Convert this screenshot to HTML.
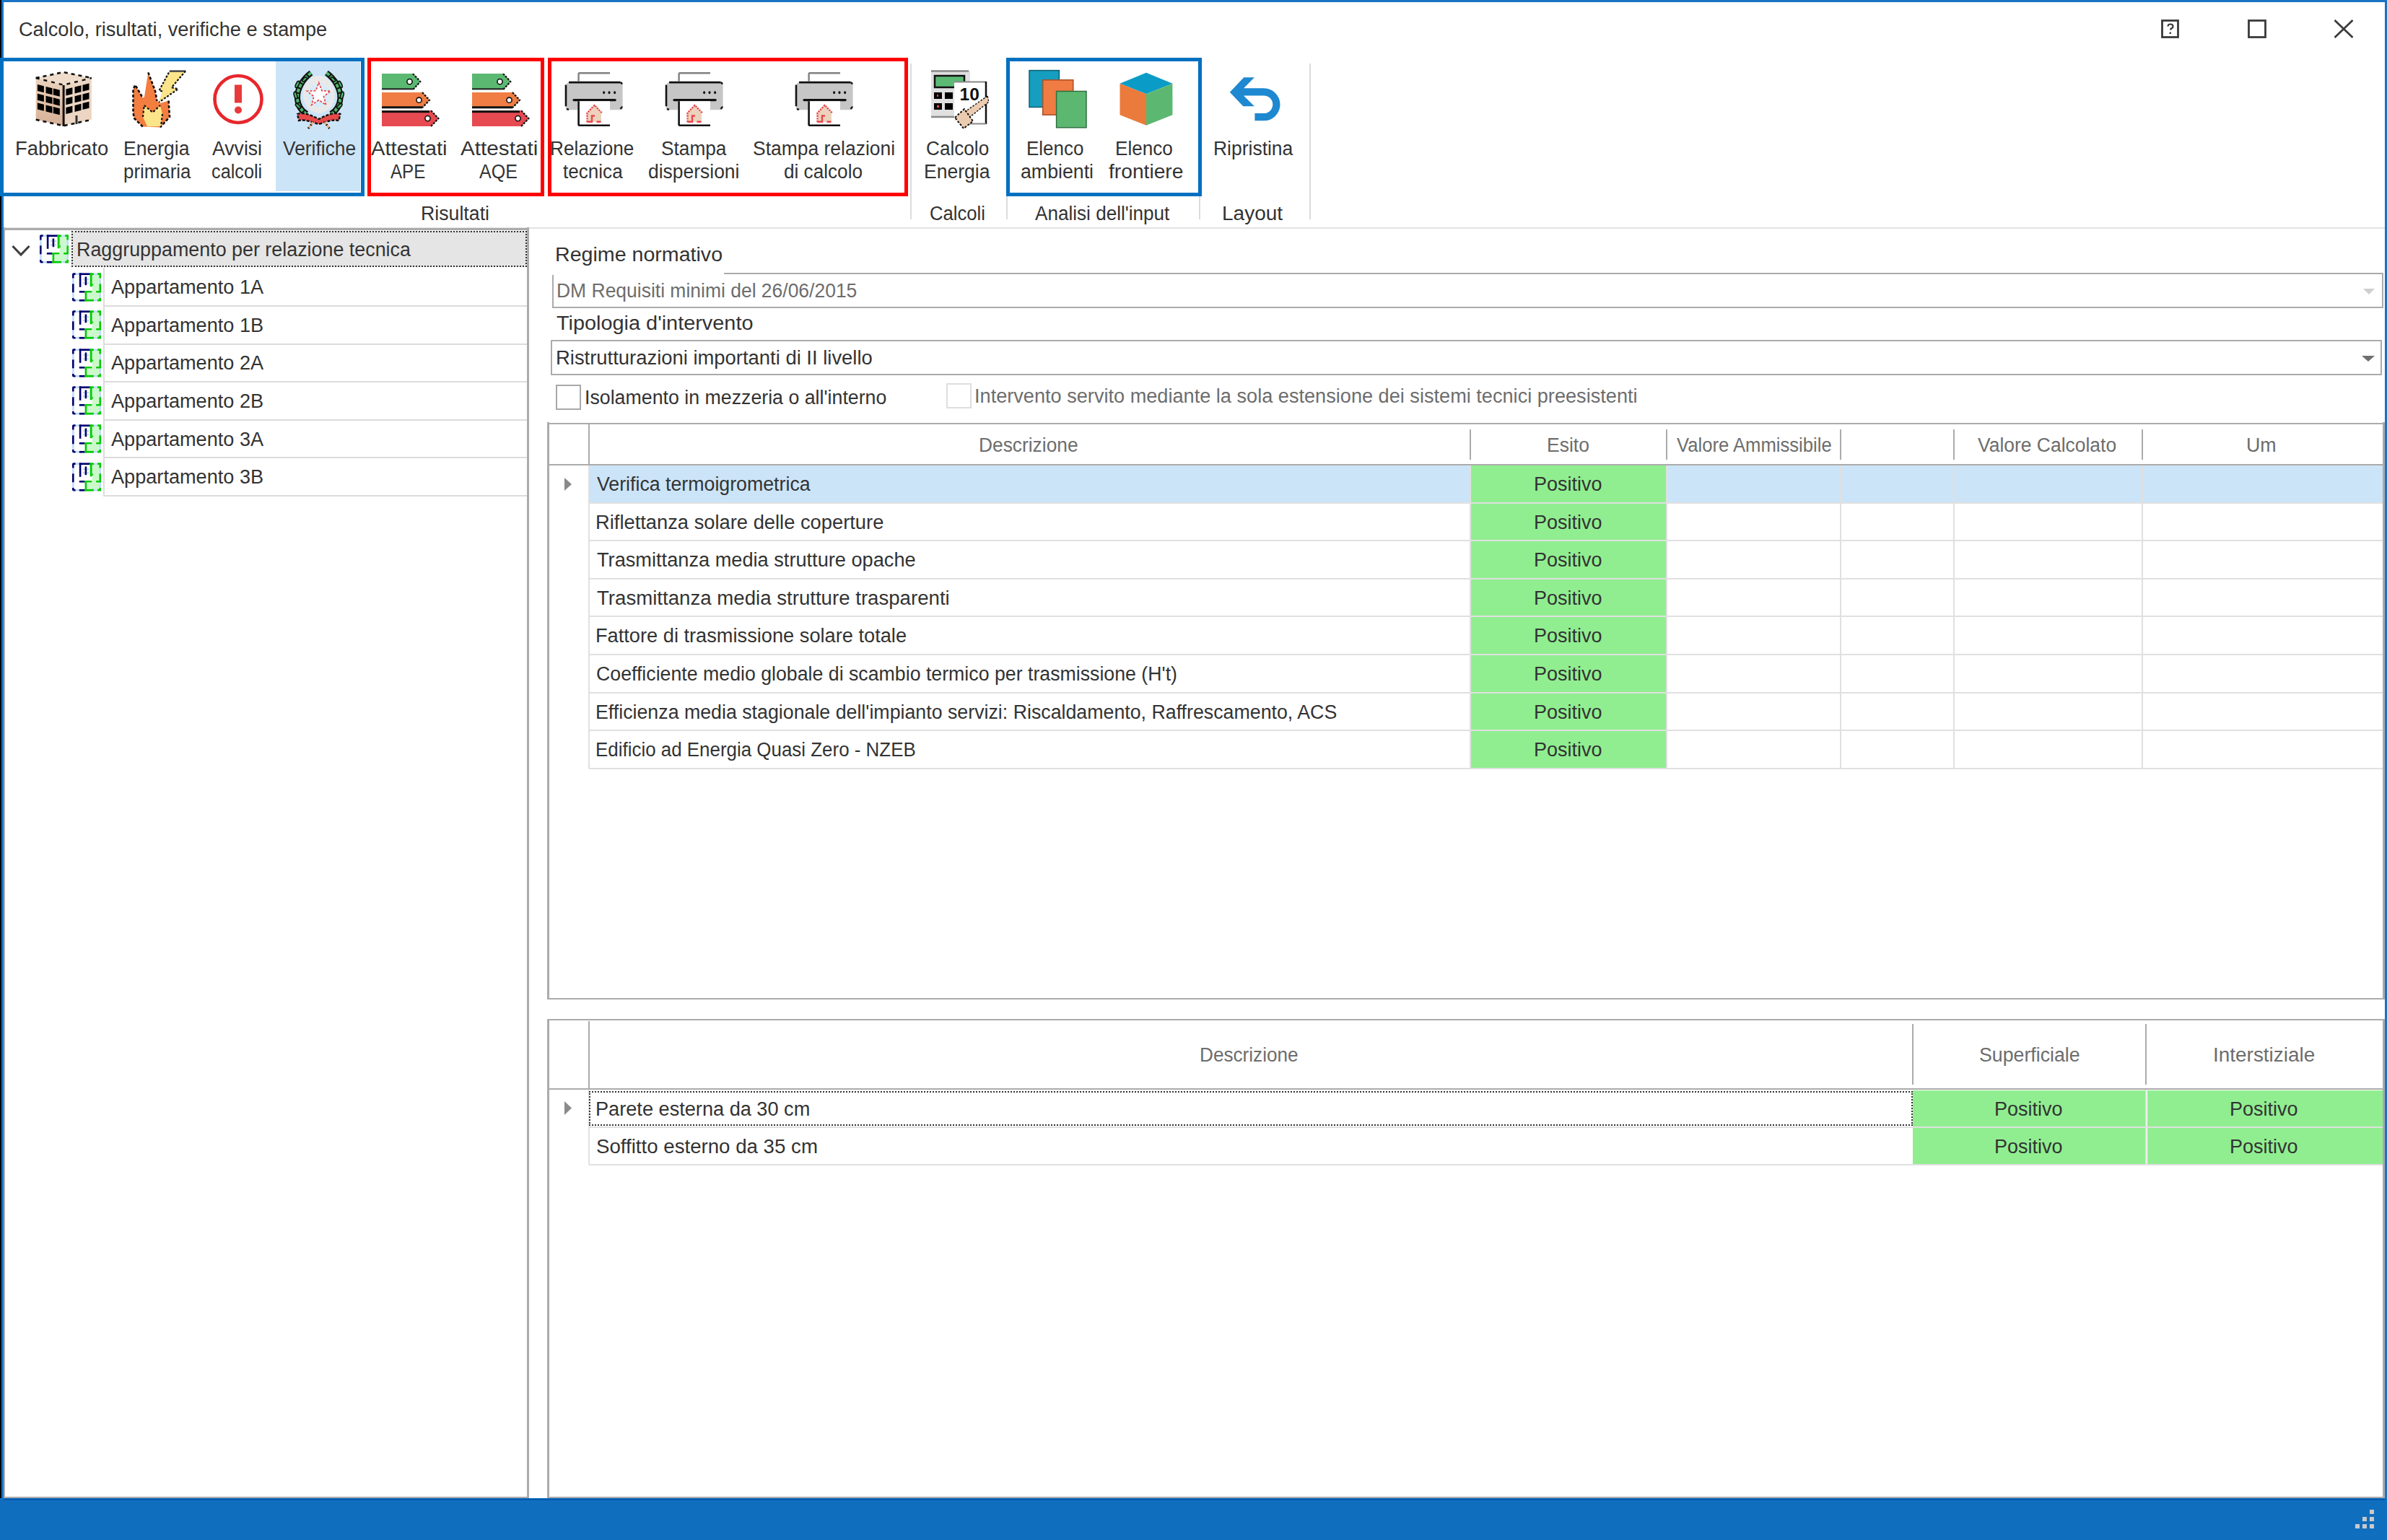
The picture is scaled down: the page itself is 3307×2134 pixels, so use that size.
<!DOCTYPE html>
<html><head><meta charset="utf-8"><style>
html,body{margin:0;padding:0;background:#fff;}
body{width:3307px;height:2134px;position:relative;overflow:hidden;font-family:"Liberation Sans",sans-serif;}
body>div{position:absolute;}
.t{white-space:nowrap;}
</style></head><body>
<div style="left:0px;top:0px;width:3307px;height:3px;background:#1a73c4;"></div>
<div style="left:0px;top:0px;width:2px;height:2134px;background:#000000;"></div>
<div style="left:2px;top:0px;width:3px;height:2134px;background:#1a73c4;"></div>
<div style="left:3304px;top:0px;width:3px;height:2134px;background:#1a73c4;"></div>
<div class="t" style="left:25.59px;top:28.14px;font-size:27px;line-height:27px;color:#333;transform:scaleX(1.0057);transform-origin:0 0;">Calcolo, risultati, verifiche e stampe</div>
<svg style="position:absolute;left:2993px;top:26px" width="28" height="28" viewBox="0 0 28 28"><rect x="2.5" y="2.5" width="22" height="23" fill="none" stroke="#3a3a3a" stroke-width="2.8"/><path d="M10.5 10.5 q0-3 3.5-3 q3.5 0 3.5 3 q0 2.3-3 3.3 v2" fill="none" stroke="#3a3a3a" stroke-width="2.2"/><rect x="12.6" y="18.6" width="2.4" height="2.4" fill="#3a3a3a"/></svg>
<svg style="position:absolute;left:3113px;top:26px" width="28" height="28" viewBox="0 0 28 28"><rect x="2.5" y="2.5" width="23" height="23" fill="none" stroke="#3a3a3a" stroke-width="2.8"/></svg>
<svg style="position:absolute;left:3232px;top:26px" width="30" height="28" viewBox="0 0 30 28"><path d="M2.5 2 L27.5 26 M27.5 2 L2.5 26" stroke="#3a3a3a" stroke-width="2.7" fill="none"/></svg>
<div style="left:382px;top:85px;width:117px;height:180px;background:#cce4f7;"></div>
<div style="left:1261px;top:88px;width:2px;height:216px;background:#dcdcdc;"></div>
<div style="left:1394px;top:88px;width:2px;height:216px;background:#dcdcdc;"></div>
<div style="left:1661px;top:88px;width:2px;height:216px;background:#dcdcdc;"></div>
<div style="left:1814px;top:88px;width:2px;height:216px;background:#dcdcdc;"></div>
<div style="left:5px;top:315px;width:3299px;height:2px;background:#e3e3e3;"></div>
<div class="t" style="left:21.48px;top:192.64px;font-size:27px;line-height:27px;color:#333333;transform:scaleX(1.0120);transform-origin:0 0;">Fabbricato</div>
<div class="t" style="left:170.64px;top:192.64px;font-size:27px;line-height:27px;color:#333333;transform:scaleX(0.9824);transform-origin:0 0;">Energia</div>
<div class="t" style="left:170.84px;top:224.64px;font-size:27px;line-height:27px;color:#333333;transform:scaleX(0.9577);transform-origin:0 0;">primaria</div>
<div class="t" style="left:294.00px;top:192.64px;font-size:27px;line-height:27px;color:#333333;transform:scaleX(0.9855);transform-origin:0 0;">Avvisi</div>
<div class="t" style="left:293.36px;top:224.64px;font-size:27px;line-height:27px;color:#333333;transform:scaleX(0.9356);transform-origin:0 0;">calcoli</div>
<div class="t" style="left:392.00px;top:192.64px;font-size:27px;line-height:27px;color:#333333;transform:scaleX(0.9767);transform-origin:0 0;">Verifiche</div>
<div class="t" style="left:514.40px;top:192.64px;font-size:27px;line-height:27px;color:#333333;transform:scaleX(1.0823);transform-origin:0 0;">Attestati</div>
<div class="t" style="left:541.10px;top:224.64px;font-size:27px;line-height:27px;color:#333333;transform:scaleX(0.8943);transform-origin:0 0;">APE</div>
<div class="t" style="left:638.40px;top:192.64px;font-size:27px;line-height:27px;color:#333333;transform:scaleX(1.1000);transform-origin:0 0;">Attestati</div>
<div class="t" style="left:664.00px;top:224.64px;font-size:27px;line-height:27px;color:#333333;transform:scaleX(0.9286);transform-origin:0 0;">AQE</div>
<div class="t" style="left:762.06px;top:192.64px;font-size:27px;line-height:27px;color:#333333;transform:scaleX(0.9684);transform-origin:0 0;">Relazione</div>
<div class="t" style="left:780.00px;top:224.64px;font-size:27px;line-height:27px;color:#333333;transform:scaleX(0.9663);transform-origin:0 0;">tecnica</div>
<div class="t" style="left:915.53px;top:192.64px;font-size:27px;line-height:27px;color:#333333;transform:scaleX(0.9717);transform-origin:0 0;">Stampa</div>
<div class="t" style="left:898.02px;top:224.64px;font-size:27px;line-height:27px;color:#333333;transform:scaleX(0.9795);transform-origin:0 0;">dispersioni</div>
<div class="t" style="left:1043.02px;top:192.64px;font-size:27px;line-height:27px;color:#333333;transform:scaleX(0.9799);transform-origin:0 0;">Stampa relazioni</div>
<div class="t" style="left:1085.53px;top:224.64px;font-size:27px;line-height:27px;color:#333333;transform:scaleX(0.9685);transform-origin:0 0;">di calcolo</div>
<div class="t" style="left:1282.83px;top:192.64px;font-size:27px;line-height:27px;color:#333333;transform:scaleX(0.9682);transform-origin:0 0;">Calcolo</div>
<div class="t" style="left:1279.53px;top:224.64px;font-size:27px;line-height:27px;color:#333333;transform:scaleX(0.9835);transform-origin:0 0;">Energia</div>
<div class="t" style="left:1422.38px;top:192.64px;font-size:27px;line-height:27px;color:#333333;transform:scaleX(0.9625);transform-origin:0 0;">Elenco</div>
<div class="t" style="left:1414.01px;top:224.64px;font-size:27px;line-height:27px;color:#333333;transform:scaleX(0.9900);transform-origin:0 0;">ambienti</div>
<div class="t" style="left:1544.57px;top:192.64px;font-size:27px;line-height:27px;color:#333333;transform:scaleX(0.9675);transform-origin:0 0;">Elenco</div>
<div class="t" style="left:1536.30px;top:224.64px;font-size:27px;line-height:27px;color:#333333;transform:scaleX(1.0439);transform-origin:0 0;">frontiere</div>
<div class="t" style="left:1680.74px;top:192.64px;font-size:27px;line-height:27px;color:#333333;transform:scaleX(0.9802);transform-origin:0 0;">Ripristina</div>
<div class="t" style="left:583.02px;top:283.14px;font-size:27px;line-height:27px;color:#333333;transform:scaleX(0.9892);transform-origin:0 0;">Risultati</div>
<div class="t" style="left:1288.35px;top:283.14px;font-size:27px;line-height:27px;color:#333333;transform:scaleX(0.9506);transform-origin:0 0;">Calcoli</div>
<div class="t" style="left:1433.60px;top:283.14px;font-size:27px;line-height:27px;color:#333333;transform:scaleX(0.9668);transform-origin:0 0;">Analisi dell'input</div>
<div class="t" style="left:1693.43px;top:283.14px;font-size:27px;line-height:27px;color:#333333;transform:scaleX(1.0367);transform-origin:0 0;">Layout</div>
<svg style="position:absolute;left:48px;top:98px" width="80" height="80" viewBox="0 0 80 80"><defs><linearGradient id="bl" x1="0" y1="0" x2="0" y2="1"><stop offset="0" stop-color="#ecd3be"/><stop offset="1" stop-color="#d6b096"/></linearGradient></defs><path d="M1.7 10 L40 2 L78.9 10 L40 19.8 Z" fill="#efdccb"/><path d="M1.7 10 L40 19.8 L40 76.3 L1.7 67.8 Z" fill="url(#bl)"/><path d="M40 19.8 L78.9 10 L78.9 67.8 L40 76.3 Z" fill="#ecd6c3"/><path d="M1.7 10 L40 2 L78.9 10" fill="none" stroke="#111" stroke-width="2.6" stroke-dasharray="5 5"/><path d="M1.7 10 L40 19.8 L78.9 10" fill="none" stroke="#111" stroke-width="2.4" stroke-dasharray="5 6"/><path d="M1.7 67.8 L40 76.3 L78.9 67.8" fill="none" stroke="#111" stroke-width="2.6" stroke-dasharray="5 5"/><rect x="38.6" y="20" width="3" height="57" fill="#111"/><path d="M3.9000000000000004 18.9652 L12.9 21.265199999999997 L12.9 30.265199999999997 L3.9000000000000004 27.9652 Z" fill="#000"/><path d="M3.9000000000000004 31.765200000000007 L12.9 34.065200000000004 L12.9 43.065200000000004 L3.9000000000000004 40.76520000000001 Z" fill="#000"/><path d="M3.9000000000000004 44.4652 L12.9 46.7652 L12.9 55.7652 L3.9000000000000004 53.4652 Z" fill="#000"/><path d="M15.5 21.9348 L24.5 24.234799999999996 L24.5 33.2348 L15.5 30.934800000000003 Z" fill="#000"/><path d="M15.5 34.73480000000001 L24.5 37.034800000000004 L24.5 46.034800000000004 L15.5 43.73480000000001 Z" fill="#000"/><path d="M15.5 47.4348 L24.5 49.7348 L24.5 58.7348 L15.5 56.4348 Z" fill="#000"/><path d="M25.8 24.5716 L34.8 26.871599999999997 L34.8 35.871599999999994 L25.8 33.5716 Z" fill="#000"/><path d="M25.8 37.37160000000001 L34.8 39.671600000000005 L34.8 48.671600000000005 L25.8 46.37160000000001 Z" fill="#000"/><path d="M25.8 50.0716 L34.8 52.371599999999994 L34.8 61.371599999999994 L25.8 59.0716 Z" fill="#000"/><path d="M43.4 25.539199999999997 L52.4 23.2792 L52.4 32.279199999999996 L43.4 34.5392 Z" fill="#000"/><path d="M43.4 38.339200000000005 L52.4 36.0792 L52.4 45.0792 L43.4 47.339200000000005 Z" fill="#000"/><path d="M43.4 50.9392 L52.4 48.679199999999994 L52.4 57.679199999999994 L43.4 59.9392 Z" fill="#000"/><path d="M55.5 22.49 L64.5 20.23 L64.5 29.23 L55.5 31.49 Z" fill="#000"/><path d="M55.5 35.290000000000006 L64.5 33.03 L64.5 42.03 L55.5 44.290000000000006 Z" fill="#000"/><path d="M55.5 47.89 L64.5 45.629999999999995 L64.5 54.629999999999995 L55.5 56.89 Z" fill="#000"/><path d="M66.5 19.717999999999996 L75.5 17.458 L75.5 26.458 L66.5 28.717999999999996 Z" fill="#000"/><path d="M66.5 32.51800000000001 L75.5 30.258000000000006 L75.5 39.258 L66.5 41.51800000000001 Z" fill="#000"/><path d="M66.5 45.118 L75.5 42.858 L75.5 51.858 L66.5 54.118 Z" fill="#000"/><rect x="56.5" y="62" width="3" height="12" fill="#333"/></svg>
<svg style="position:absolute;left:182px;top:96px" width="80" height="84" viewBox="0 0 80 84"><path d="M53 2.4 L75.1 2.4 L55.7 25.2 L64.7 27.3 L37.8 46 L43 30.5 L38.5 29.5 Z" fill="#fbe48a"/><path d="M53 2.6 L75.1 2.6" stroke="#444" stroke-width="2.5"/><path d="M75.1 2.4 L55.7 25.2 L64.7 27.3 L37.8 46 M43 30.5 L38.5 29.5 L53 2.4" fill="none" stroke="#111" stroke-width="2.2" stroke-dasharray="3 2"/><path d="M15.7 79.5 L4 68 L2.5 60 L2.5 28 L5.3 21.7 L16 40 L18 38 L23.3 4.4 L33 30 L35.5 44 L40 47 L51.6 43.5 L53 66 L40 80.5 Z" fill="#f37e3f"/><path d="M15.7 79.5 L4 68 L2.5 60 L2.5 28 L5.3 21.7 L16 40 M23.3 4.4 L33 30 L35.5 44 M51.6 43.5 L53 66 L40 80.5" fill="none" stroke="#111" stroke-width="2.6" stroke-dasharray="4 2.5"/><path d="M17.7 50 L29.5 59.7 L40 50 L43 62 L41 79 L22 79.5 L16 66 Z" fill="#fbe48a"/><path d="M17.7 50 L29.5 59.7 L40 50 M16 66 L17.7 50 M43 62 L41 79" fill="none" stroke="#111" stroke-width="2.2" stroke-dasharray="3 2.5"/></svg>
<svg style="position:absolute;left:293px;top:100px" width="74" height="75" viewBox="0 0 74 75"><circle cx="37" cy="37.5" r="32.5" fill="none" stroke="#e8262d" stroke-width="4.6"/><rect x="32" y="17.5" width="10" height="25" fill="#e83a3a"/><circle cx="37" cy="52.5" r="5" fill="#e83a3a"/></svg>
<svg style="position:absolute;left:400px;top:95px" width="84" height="88" viewBox="0 0 84 88"><ellipse cx="41.7" cy="35.8" rx="22" ry="26" fill="#e9e9e9"/><circle cx="41.7" cy="37" r="16.5" fill="#d6edf9"/><path d="M41.7 19.5 L45.9 30.7 L57.9 31.2 L48.5 38.7 L51.7 50.3 L41.7 43.7 L31.7 50.3 L34.9 38.7 L25.5 31.2 L37.5 30.7 Z" fill="#fff" stroke="#e84a4a" stroke-width="1.8" stroke-dasharray="3 2"/><g id="br"><path d="M31 6 C20 14 11 28 12 42 C13 52 18 59 25 63" fill="none" stroke="#111" stroke-width="8"/><path d="M31 6 C20 14 11 28 12 42 C13 52 18 59 25 63" fill="none" stroke="#4db86a" stroke-width="4" stroke-dasharray="5 2"/><ellipse cx="12" cy="22" rx="2" ry="5" transform="rotate(25 12 22)" fill="#4db86a" stroke="#111" stroke-width="1.6"/><ellipse cx="9.5" cy="37" rx="2" ry="5" transform="rotate(-15 9.5 37)" fill="#4db86a" stroke="#111" stroke-width="1.6"/><ellipse cx="13" cy="52" rx="2" ry="4.5" transform="rotate(-45 13 52)" fill="#4db86a" stroke="#111" stroke-width="1.6"/><ellipse cx="22" cy="15" rx="1.8" ry="4" transform="rotate(45 22 15)" fill="#4db86a" stroke="#111" stroke-width="1.5"/></g><use href="#br" transform="translate(83.4 0) scale(-1 1)"/><path d="M12 63 C20 60 30 64 41.7 70 C53 64 63 60 71.4 63 L69.5 72 C60 70 52 74 41.7 77 C31 74 23 70 14 72 Z" fill="#e84a4a" stroke="#111" stroke-width="2.4" stroke-dasharray="4 2"/><path d="M27 83 L34 74 M56.4 83 L49.4 74" stroke="#e2b48e" stroke-width="3"/><path d="M27 83 L34 74 M56.4 83 L49.4 74" stroke="#111" stroke-width="3" stroke-dasharray="1.5 4" fill="none"/></svg>
<svg style="position:absolute;left:529px;top:101.7px" width="82" height="78" viewBox="0 0 82 78"><path d="M0 0 L43 0 L53.3 11.15 L43 22.3 L0 22.3 Z" fill="#5bb871"/><path d="M43 0 L53.3 11.15 L43 22.3" fill="none" stroke="#111" stroke-width="2.2" stroke-dasharray="3 1.5"/><circle cx="38.5" cy="11.15" r="3.6" fill="#fff" stroke="#111" stroke-width="1.6"/><path d="M0 26.1 L56 26.1 L66 36.7 L56 47.3 L0 47.3 Z" fill="#f07d44"/><path d="M56 26.1 L66 36.7 L56 47.3" fill="none" stroke="#111" stroke-width="2.2" stroke-dasharray="3 1.5"/><circle cx="51.5" cy="36.7" r="3.6" fill="#fff" stroke="#111" stroke-width="1.6"/><path d="M0 51.2 L68 51.2 L78.4 62.1 L68 73.0 L0 73.0 Z" fill="#e84a52"/><path d="M68 51.2 L78.4 62.1 L68 73.0" fill="none" stroke="#111" stroke-width="2.2" stroke-dasharray="3 1.5"/><circle cx="63.5" cy="62.1" r="3.6" fill="#fff" stroke="#111" stroke-width="1.6"/><rect x="0" y="45.3" width="56" height="3" fill="#111"/><rect x="0" y="51.2" width="66" height="3" fill="#111"/><rect x="0" y="20.3" width="43" height="2" fill="#222"/></svg>
<svg style="position:absolute;left:654px;top:101.7px" width="82" height="78" viewBox="0 0 82 78"><path d="M0 0 L43 0 L53.3 11.15 L43 22.3 L0 22.3 Z" fill="#5bb871"/><path d="M43 0 L53.3 11.15 L43 22.3" fill="none" stroke="#111" stroke-width="2.2" stroke-dasharray="3 1.5"/><circle cx="38.5" cy="11.15" r="3.6" fill="#fff" stroke="#111" stroke-width="1.6"/><path d="M0 26.1 L56 26.1 L66 36.7 L56 47.3 L0 47.3 Z" fill="#f07d44"/><path d="M56 26.1 L66 36.7 L56 47.3" fill="none" stroke="#111" stroke-width="2.2" stroke-dasharray="3 1.5"/><circle cx="51.5" cy="36.7" r="3.6" fill="#fff" stroke="#111" stroke-width="1.6"/><path d="M0 51.2 L68 51.2 L78.4 62.1 L68 73.0 L0 73.0 Z" fill="#e84a52"/><path d="M68 51.2 L78.4 62.1 L68 73.0" fill="none" stroke="#111" stroke-width="2.2" stroke-dasharray="3 1.5"/><circle cx="63.5" cy="62.1" r="3.6" fill="#fff" stroke="#111" stroke-width="1.6"/><rect x="0" y="45.3" width="56" height="3" fill="#111"/><rect x="0" y="51.2" width="66" height="3" fill="#111"/><rect x="0" y="20.3" width="43" height="2" fill="#222"/></svg>
<svg style="position:absolute;left:781px;top:99px" width="84" height="78" viewBox="0 0 84 78"><path d="M20.6 13.5 L20.6 3.3 Q20.6 2.3 22 2.3 L64 2.3" fill="none" stroke="#808080" stroke-width="2.4"/><path d="M4 17 Q4 15.5 6 15.5 L79 15.5 Q81.6 15.5 81.6 18 L81.6 51 Q81.6 53.2 79 53.2 L64 53.2 L64 41 L19.3 41 L19.3 53.2 L6 53.2 Q3 53.2 3 50 Z" fill="#c6c6c6"/><path d="M7 15.2 L78.4 15.2" stroke="#111" stroke-width="2.8"/><path d="M78.4 15.2 Q80.3 15.5 80.8 17.6" fill="none" stroke="#111" stroke-width="2.4"/><path d="M3 18.5 L3 48.3" stroke="#111" stroke-width="2.6"/><path d="M4 52 L7 52.8" stroke="#111" stroke-width="2.4"/><path d="M78.3 51.8 Q80.6 50.5 80.8 48.5" fill="none" stroke="#111" stroke-width="2.4"/><path d="M14 39.6 L71.2 39.6" stroke="#111" stroke-width="3.2" stroke-linecap="round"/><ellipse cx="55.6" cy="29.2" rx="1.5" ry="2" fill="#111"/><ellipse cx="63" cy="29.2" rx="1.5" ry="2" fill="#111"/><ellipse cx="70.6" cy="29.2" rx="1.5" ry="2" fill="#111"/><rect x="21.9" y="41.3" width="42.1" height="32" fill="#fff"/><path d="M20.6 41.3 L20.6 73.5 Q20.6 74.7 22 74.7 L64 74.7" fill="none" stroke="#111" stroke-width="2.6"/><path d="M33 57 L42.6 46.8 L52 57 L52 70 L33 70 Z" fill="#ecd2bd"/><path d="M32.5 70.2 L32.5 57.5 L42.6 46.8 L53.5 58" fill="none" stroke="#e8484c" stroke-width="2.3" stroke-dasharray="2.4 1.2"/><path d="M32.5 69.8 L39 69.8 L39 61.5 L43 61.5 M45.5 69.8 L51.5 69.8" fill="none" stroke="#e8484c" stroke-width="2.4"/></svg>
<svg style="position:absolute;left:920px;top:99px" width="84" height="78" viewBox="0 0 84 78"><path d="M20.6 13.5 L20.6 3.3 Q20.6 2.3 22 2.3 L64 2.3" fill="none" stroke="#808080" stroke-width="2.4"/><path d="M4 17 Q4 15.5 6 15.5 L79 15.5 Q81.6 15.5 81.6 18 L81.6 51 Q81.6 53.2 79 53.2 L64 53.2 L64 41 L19.3 41 L19.3 53.2 L6 53.2 Q3 53.2 3 50 Z" fill="#c6c6c6"/><path d="M7 15.2 L78.4 15.2" stroke="#111" stroke-width="2.8"/><path d="M78.4 15.2 Q80.3 15.5 80.8 17.6" fill="none" stroke="#111" stroke-width="2.4"/><path d="M3 18.5 L3 48.3" stroke="#111" stroke-width="2.6"/><path d="M4 52 L7 52.8" stroke="#111" stroke-width="2.4"/><path d="M78.3 51.8 Q80.6 50.5 80.8 48.5" fill="none" stroke="#111" stroke-width="2.4"/><path d="M14 39.6 L71.2 39.6" stroke="#111" stroke-width="3.2" stroke-linecap="round"/><ellipse cx="55.6" cy="29.2" rx="1.5" ry="2" fill="#111"/><ellipse cx="63" cy="29.2" rx="1.5" ry="2" fill="#111"/><ellipse cx="70.6" cy="29.2" rx="1.5" ry="2" fill="#111"/><rect x="21.9" y="41.3" width="42.1" height="32" fill="#fff"/><path d="M20.6 41.3 L20.6 73.5 Q20.6 74.7 22 74.7 L64 74.7" fill="none" stroke="#111" stroke-width="2.6"/><path d="M33 57 L42.6 46.8 L52 57 L52 70 L33 70 Z" fill="#ecd2bd"/><path d="M32.5 70.2 L32.5 57.5 L42.6 46.8 L53.5 58" fill="none" stroke="#e8484c" stroke-width="2.3" stroke-dasharray="2.4 1.2"/><path d="M32.5 69.8 L39 69.8 L39 61.5 L43 61.5 M45.5 69.8 L51.5 69.8" fill="none" stroke="#e8484c" stroke-width="2.4"/></svg>
<svg style="position:absolute;left:1100px;top:99px" width="84" height="78" viewBox="0 0 84 78"><path d="M20.6 13.5 L20.6 3.3 Q20.6 2.3 22 2.3 L64 2.3" fill="none" stroke="#808080" stroke-width="2.4"/><path d="M4 17 Q4 15.5 6 15.5 L79 15.5 Q81.6 15.5 81.6 18 L81.6 51 Q81.6 53.2 79 53.2 L64 53.2 L64 41 L19.3 41 L19.3 53.2 L6 53.2 Q3 53.2 3 50 Z" fill="#c6c6c6"/><path d="M7 15.2 L78.4 15.2" stroke="#111" stroke-width="2.8"/><path d="M78.4 15.2 Q80.3 15.5 80.8 17.6" fill="none" stroke="#111" stroke-width="2.4"/><path d="M3 18.5 L3 48.3" stroke="#111" stroke-width="2.6"/><path d="M4 52 L7 52.8" stroke="#111" stroke-width="2.4"/><path d="M78.3 51.8 Q80.6 50.5 80.8 48.5" fill="none" stroke="#111" stroke-width="2.4"/><path d="M14 39.6 L71.2 39.6" stroke="#111" stroke-width="3.2" stroke-linecap="round"/><ellipse cx="55.6" cy="29.2" rx="1.5" ry="2" fill="#111"/><ellipse cx="63" cy="29.2" rx="1.5" ry="2" fill="#111"/><ellipse cx="70.6" cy="29.2" rx="1.5" ry="2" fill="#111"/><rect x="21.9" y="41.3" width="42.1" height="32" fill="#fff"/><path d="M20.6 41.3 L20.6 73.5 Q20.6 74.7 22 74.7 L64 74.7" fill="none" stroke="#111" stroke-width="2.6"/><path d="M33 57 L42.6 46.8 L52 57 L52 70 L33 70 Z" fill="#ecd2bd"/><path d="M32.5 70.2 L32.5 57.5 L42.6 46.8 L53.5 58" fill="none" stroke="#e8484c" stroke-width="2.3" stroke-dasharray="2.4 1.2"/><path d="M32.5 69.8 L39 69.8 L39 61.5 L43 61.5 M45.5 69.8 L51.5 69.8" fill="none" stroke="#e8484c" stroke-width="2.4"/></svg>
<svg style="position:absolute;left:1288px;top:96px" width="82" height="84" viewBox="0 0 82 84"><rect x="2" y="2" width="54" height="64" fill="#e0e0e0"/><path d="M2 2.5 L54 2.5 M2 66 L40 66" stroke="#888" stroke-width="2.5"/><rect x="7" y="9" width="41" height="16" fill="#5cba74" stroke="#111" stroke-width="2.5"/><rect x="6" y="32" width="11" height="9" fill="#000"/><rect x="21" y="32" width="11" height="9" fill="#000"/><rect x="6" y="47" width="11" height="9" fill="#000"/><rect x="21" y="47" width="11" height="9" fill="#000"/><rect x="10" y="35" width="2" height="3" fill="#e84a4a"/><rect x="10" y="50" width="3" height="3" fill="#e84a4a"/><rect x="34" y="17" width="44" height="59" fill="#fff"/><path d="M34 17.5 L78 17.5" stroke="#888" stroke-width="2"/><path d="M78 17 L78 76" stroke="#111" stroke-width="2.5"/><path d="M50 75.5 L78 75.5" stroke="#888" stroke-width="2"/><text x="41.5" y="42.8" font-family="Liberation Sans" font-weight="bold" font-size="24.5" fill="#111">10</text><path d="M80 37 L50 58 L56 66 L82 45 Z" fill="#ecccb0" stroke="#111" stroke-width="1.5" stroke-dasharray="2.5 2"/><path d="M35 67 L48 55 L60 72 L47 82 Z" fill="#ecccb0" stroke="#111" stroke-width="2" stroke-dasharray="3 2"/></svg>
<svg style="position:absolute;left:1424px;top:96px" width="84" height="84" viewBox="0 0 84 84"><rect x="2" y="1.6" width="41.4" height="50.9" fill="#159ebf" stroke="#0e5f73" stroke-width="1.5"/><rect x="20.7" y="14.8" width="42.1" height="48.4" fill="#f07b43" stroke="#a5502a" stroke-width="1.5"/><rect x="39.6" y="30.5" width="41.4" height="50.3" fill="#5cb870" stroke="#2f6f3f" stroke-width="1.5"/></svg>
<svg style="position:absolute;left:1549px;top:98px" width="78" height="78" viewBox="0 0 78 78"><path d="M2.5 17.8 L39 2.8 L75.4 17.8 L39 32.3 Z" fill="#0a9cc6"/><path d="M2.5 17.8 L39 32.3 L39 75.7 L2.5 61.2 Z" fill="#ea7b3c"/><path d="M39 32.3 L75.4 17.8 L75.4 61.2 L39 75.7 Z" fill="#5cb870"/></svg>
<svg style="position:absolute;left:1700px;top:104px" width="78" height="68" viewBox="0 0 78 68"><path d="M3.8 23.8 L23.3 3.3 L37.9 3.3 L23.3 18 L23.3 29 L37.9 43.2 L22.3 43.2 Z" fill="#1e88d0"/><path d="M22 23.4 L51 23.4 A17.4 17.4 0 0 1 51 58.2 L38.4 58.2" fill="none" stroke="#1e88d0" stroke-width="10.2"/></svg>
<div style="left:0px;top:80px;width:505px;height:192px;box-sizing:border-box;border:5px solid #0070c0;"></div>
<div style="left:509px;top:80px;width:245px;height:192px;box-sizing:border-box;border:5px solid #ff0000;"></div>
<div style="left:759px;top:80px;width:499px;height:192px;box-sizing:border-box;border:5px solid #ff0000;"></div>
<div style="left:1394px;top:80px;width:271px;height:192px;box-sizing:border-box;border:5px solid #0070c0;"></div>
<div style="left:5px;top:316px;width:728px;height:3px;background:#ababab;"></div>
<div style="left:5px;top:315px;width:2px;height:1761px;background:#ababab;"></div>
<div style="left:5px;top:2074px;width:728px;height:2px;background:#ababab;"></div>
<div style="left:730px;top:315px;width:3px;height:1761px;background:#ababab;"></div>
<div style="left:99px;top:320px;width:631px;height:50px;background:#e5e5e5;"></div>
<div style="left:99px;top:320px;width:631px;height:50px;box-sizing:border-box;border:2px solid #333;border-style:dotted;"></div>
<svg style="position:absolute;left:15px;top:338px" width="28" height="20" viewBox="0 0 28 20"><path d="M2.5 3 L14 15 L25.5 3" fill="none" stroke="#404040" stroke-width="3.2"/></svg>
<svg style="position:absolute;left:54.5px;top:325.2px" width="40" height="40" viewBox="0 0 40 40"><rect x="27.6" y="3" width="9.8" height="33.7" fill="#ccf9cc"/><rect x="20.2" y="27.3" width="17.2" height="9.4" fill="#ccf9cc"/><rect x="0.2" y="7.5" width="2.4" height="7.8" fill="#bcdcfa"/><rect x="0.2" y="27.3" width="2.4" height="7.7" fill="#bcdcfa"/><rect x="4.6" y="0.4" width="5.2" height="2.6" fill="#bcdcfa"/><rect x="4.6" y="36.9" width="5.2" height="2.6" fill="#bcdcfa"/><rect x="37.4" y="7.5" width="2.6" height="7.8" fill="#bcdcfa"/><rect x="37.4" y="27.3" width="2.6" height="7.7" fill="#bcdcfa"/><rect x="29.9" y="0.4" width="5.2" height="2.6" fill="#bcdcfa"/><rect x="29.9" y="36.9" width="5.2" height="2.6" fill="#bcdcfa"/><rect x="15" y="8" width="2.4" height="2.4" fill="#bcdcfa"/><rect x="15" y="13" width="2.4" height="2.4" fill="#bcdcfa"/><rect x="20.6" y="8" width="2.4" height="2.4" fill="#bcdcfa"/><rect x="20.6" y="13" width="2.4" height="2.4" fill="#bcdcfa"/><path d="M1.3 7.5 L1.3 2.2 Q1.3 1.6 2 1.6 L4.6 1.6" fill="none" stroke="#000070" stroke-width="2.6"/><rect x="0" y="15.3" width="2.6" height="12" fill="#000070"/><path d="M1.3 35 L1.3 37.4 Q1.3 38.2 2.2 38.2 L4.6 38.2" fill="none" stroke="#000070" stroke-width="2.6"/><rect x="9.8" y="0.4" width="15" height="2.7" fill="#000070"/><rect x="9.8" y="0.4" width="2.6" height="19.4" fill="#000070"/><rect x="17.6" y="5.5" width="2.6" height="11.7" fill="#000070"/><rect x="9.8" y="25" width="7.8" height="2.6" fill="#000070"/><rect x="9.8" y="36.9" width="7.8" height="2.7" fill="#000070"/><rect x="24.7" y="0.4" width="5.2" height="2.7" fill="#00cc00"/><path d="M35.1 1.7 L38.7 1.7 L38.7 7.5" fill="none" stroke="#00cc00" stroke-width="2.7"/><rect x="24.7" y="0.4" width="2.9" height="18.8" fill="#00cc00"/><path d="M27.6 14.5 L29.5 16.6 L27.6 18.5 Z" fill="#00cc00"/><path d="M33.2 26.2 L38.7 26.2 L38.7 15.3" fill="none" stroke="#00cc00" stroke-width="2.6"/><rect x="17.6" y="25" width="9.7" height="2.4" fill="#00cc00"/><rect x="17.6" y="25" width="2.6" height="14.4" fill="#00cc00"/><rect x="17.6" y="36.8" width="12.3" height="2.8" fill="#00cc00"/><path d="M35.1 38.2 L38.7 38.2 L38.7 35" fill="none" stroke="#00cc00" stroke-width="2.8"/></svg>
<div class="t" style="left:106.21px;top:332.84px;font-size:27px;line-height:27px;color:#333333;transform:scaleX(0.9950);transform-origin:0 0;">Raggruppamento per relazione tecnica</div>
<svg style="position:absolute;left:99.5px;top:377.5px" width="40" height="40" viewBox="0 0 40 40"><rect x="27.6" y="3" width="9.8" height="33.7" fill="#ccf9cc"/><rect x="20.2" y="27.3" width="17.2" height="9.4" fill="#ccf9cc"/><rect x="0.2" y="7.5" width="2.4" height="7.8" fill="#bcdcfa"/><rect x="0.2" y="27.3" width="2.4" height="7.7" fill="#bcdcfa"/><rect x="4.6" y="0.4" width="5.2" height="2.6" fill="#bcdcfa"/><rect x="4.6" y="36.9" width="5.2" height="2.6" fill="#bcdcfa"/><rect x="37.4" y="7.5" width="2.6" height="7.8" fill="#bcdcfa"/><rect x="37.4" y="27.3" width="2.6" height="7.7" fill="#bcdcfa"/><rect x="29.9" y="0.4" width="5.2" height="2.6" fill="#bcdcfa"/><rect x="29.9" y="36.9" width="5.2" height="2.6" fill="#bcdcfa"/><rect x="15" y="8" width="2.4" height="2.4" fill="#bcdcfa"/><rect x="15" y="13" width="2.4" height="2.4" fill="#bcdcfa"/><rect x="20.6" y="8" width="2.4" height="2.4" fill="#bcdcfa"/><rect x="20.6" y="13" width="2.4" height="2.4" fill="#bcdcfa"/><path d="M1.3 7.5 L1.3 2.2 Q1.3 1.6 2 1.6 L4.6 1.6" fill="none" stroke="#000070" stroke-width="2.6"/><rect x="0" y="15.3" width="2.6" height="12" fill="#000070"/><path d="M1.3 35 L1.3 37.4 Q1.3 38.2 2.2 38.2 L4.6 38.2" fill="none" stroke="#000070" stroke-width="2.6"/><rect x="9.8" y="0.4" width="15" height="2.7" fill="#000070"/><rect x="9.8" y="0.4" width="2.6" height="19.4" fill="#000070"/><rect x="17.6" y="5.5" width="2.6" height="11.7" fill="#000070"/><rect x="9.8" y="25" width="7.8" height="2.6" fill="#000070"/><rect x="9.8" y="36.9" width="7.8" height="2.7" fill="#000070"/><rect x="24.7" y="0.4" width="5.2" height="2.7" fill="#00cc00"/><path d="M35.1 1.7 L38.7 1.7 L38.7 7.5" fill="none" stroke="#00cc00" stroke-width="2.7"/><rect x="24.7" y="0.4" width="2.9" height="18.8" fill="#00cc00"/><path d="M27.6 14.5 L29.5 16.6 L27.6 18.5 Z" fill="#00cc00"/><path d="M33.2 26.2 L38.7 26.2 L38.7 15.3" fill="none" stroke="#00cc00" stroke-width="2.6"/><rect x="17.6" y="25" width="9.7" height="2.4" fill="#00cc00"/><rect x="17.6" y="25" width="2.6" height="14.4" fill="#00cc00"/><rect x="17.6" y="36.8" width="12.3" height="2.8" fill="#00cc00"/><path d="M35.1 38.2 L38.7 38.2 L38.7 35" fill="none" stroke="#00cc00" stroke-width="2.8"/></svg>
<div class="t" style="left:154.40px;top:385.14px;font-size:27px;line-height:27px;color:#333333;transform:scaleX(1.0048);transform-origin:0 0;">Appartamento 1A</div>
<div style="left:143px;top:423px;width:587px;height:2px;background:#dcdcdc;"></div>
<svg style="position:absolute;left:99.5px;top:430.1px" width="40" height="40" viewBox="0 0 40 40"><rect x="27.6" y="3" width="9.8" height="33.7" fill="#ccf9cc"/><rect x="20.2" y="27.3" width="17.2" height="9.4" fill="#ccf9cc"/><rect x="0.2" y="7.5" width="2.4" height="7.8" fill="#bcdcfa"/><rect x="0.2" y="27.3" width="2.4" height="7.7" fill="#bcdcfa"/><rect x="4.6" y="0.4" width="5.2" height="2.6" fill="#bcdcfa"/><rect x="4.6" y="36.9" width="5.2" height="2.6" fill="#bcdcfa"/><rect x="37.4" y="7.5" width="2.6" height="7.8" fill="#bcdcfa"/><rect x="37.4" y="27.3" width="2.6" height="7.7" fill="#bcdcfa"/><rect x="29.9" y="0.4" width="5.2" height="2.6" fill="#bcdcfa"/><rect x="29.9" y="36.9" width="5.2" height="2.6" fill="#bcdcfa"/><rect x="15" y="8" width="2.4" height="2.4" fill="#bcdcfa"/><rect x="15" y="13" width="2.4" height="2.4" fill="#bcdcfa"/><rect x="20.6" y="8" width="2.4" height="2.4" fill="#bcdcfa"/><rect x="20.6" y="13" width="2.4" height="2.4" fill="#bcdcfa"/><path d="M1.3 7.5 L1.3 2.2 Q1.3 1.6 2 1.6 L4.6 1.6" fill="none" stroke="#000070" stroke-width="2.6"/><rect x="0" y="15.3" width="2.6" height="12" fill="#000070"/><path d="M1.3 35 L1.3 37.4 Q1.3 38.2 2.2 38.2 L4.6 38.2" fill="none" stroke="#000070" stroke-width="2.6"/><rect x="9.8" y="0.4" width="15" height="2.7" fill="#000070"/><rect x="9.8" y="0.4" width="2.6" height="19.4" fill="#000070"/><rect x="17.6" y="5.5" width="2.6" height="11.7" fill="#000070"/><rect x="9.8" y="25" width="7.8" height="2.6" fill="#000070"/><rect x="9.8" y="36.9" width="7.8" height="2.7" fill="#000070"/><rect x="24.7" y="0.4" width="5.2" height="2.7" fill="#00cc00"/><path d="M35.1 1.7 L38.7 1.7 L38.7 7.5" fill="none" stroke="#00cc00" stroke-width="2.7"/><rect x="24.7" y="0.4" width="2.9" height="18.8" fill="#00cc00"/><path d="M27.6 14.5 L29.5 16.6 L27.6 18.5 Z" fill="#00cc00"/><path d="M33.2 26.2 L38.7 26.2 L38.7 15.3" fill="none" stroke="#00cc00" stroke-width="2.6"/><rect x="17.6" y="25" width="9.7" height="2.4" fill="#00cc00"/><rect x="17.6" y="25" width="2.6" height="14.4" fill="#00cc00"/><rect x="17.6" y="36.8" width="12.3" height="2.8" fill="#00cc00"/><path d="M35.1 38.2 L38.7 38.2 L38.7 35" fill="none" stroke="#00cc00" stroke-width="2.8"/></svg>
<div class="t" style="left:154.40px;top:437.74px;font-size:27px;line-height:27px;color:#333333;transform:scaleX(1.0048);transform-origin:0 0;">Appartamento 1B</div>
<div style="left:143px;top:476px;width:587px;height:2px;background:#dcdcdc;"></div>
<svg style="position:absolute;left:99.5px;top:482.7px" width="40" height="40" viewBox="0 0 40 40"><rect x="27.6" y="3" width="9.8" height="33.7" fill="#ccf9cc"/><rect x="20.2" y="27.3" width="17.2" height="9.4" fill="#ccf9cc"/><rect x="0.2" y="7.5" width="2.4" height="7.8" fill="#bcdcfa"/><rect x="0.2" y="27.3" width="2.4" height="7.7" fill="#bcdcfa"/><rect x="4.6" y="0.4" width="5.2" height="2.6" fill="#bcdcfa"/><rect x="4.6" y="36.9" width="5.2" height="2.6" fill="#bcdcfa"/><rect x="37.4" y="7.5" width="2.6" height="7.8" fill="#bcdcfa"/><rect x="37.4" y="27.3" width="2.6" height="7.7" fill="#bcdcfa"/><rect x="29.9" y="0.4" width="5.2" height="2.6" fill="#bcdcfa"/><rect x="29.9" y="36.9" width="5.2" height="2.6" fill="#bcdcfa"/><rect x="15" y="8" width="2.4" height="2.4" fill="#bcdcfa"/><rect x="15" y="13" width="2.4" height="2.4" fill="#bcdcfa"/><rect x="20.6" y="8" width="2.4" height="2.4" fill="#bcdcfa"/><rect x="20.6" y="13" width="2.4" height="2.4" fill="#bcdcfa"/><path d="M1.3 7.5 L1.3 2.2 Q1.3 1.6 2 1.6 L4.6 1.6" fill="none" stroke="#000070" stroke-width="2.6"/><rect x="0" y="15.3" width="2.6" height="12" fill="#000070"/><path d="M1.3 35 L1.3 37.4 Q1.3 38.2 2.2 38.2 L4.6 38.2" fill="none" stroke="#000070" stroke-width="2.6"/><rect x="9.8" y="0.4" width="15" height="2.7" fill="#000070"/><rect x="9.8" y="0.4" width="2.6" height="19.4" fill="#000070"/><rect x="17.6" y="5.5" width="2.6" height="11.7" fill="#000070"/><rect x="9.8" y="25" width="7.8" height="2.6" fill="#000070"/><rect x="9.8" y="36.9" width="7.8" height="2.7" fill="#000070"/><rect x="24.7" y="0.4" width="5.2" height="2.7" fill="#00cc00"/><path d="M35.1 1.7 L38.7 1.7 L38.7 7.5" fill="none" stroke="#00cc00" stroke-width="2.7"/><rect x="24.7" y="0.4" width="2.9" height="18.8" fill="#00cc00"/><path d="M27.6 14.5 L29.5 16.6 L27.6 18.5 Z" fill="#00cc00"/><path d="M33.2 26.2 L38.7 26.2 L38.7 15.3" fill="none" stroke="#00cc00" stroke-width="2.6"/><rect x="17.6" y="25" width="9.7" height="2.4" fill="#00cc00"/><rect x="17.6" y="25" width="2.6" height="14.4" fill="#00cc00"/><rect x="17.6" y="36.8" width="12.3" height="2.8" fill="#00cc00"/><path d="M35.1 38.2 L38.7 38.2 L38.7 35" fill="none" stroke="#00cc00" stroke-width="2.8"/></svg>
<div class="t" style="left:154.40px;top:490.34px;font-size:27px;line-height:27px;color:#333333;transform:scaleX(1.0048);transform-origin:0 0;">Appartamento 2A</div>
<div style="left:143px;top:528px;width:587px;height:2px;background:#dcdcdc;"></div>
<svg style="position:absolute;left:99.5px;top:535.3px" width="40" height="40" viewBox="0 0 40 40"><rect x="27.6" y="3" width="9.8" height="33.7" fill="#ccf9cc"/><rect x="20.2" y="27.3" width="17.2" height="9.4" fill="#ccf9cc"/><rect x="0.2" y="7.5" width="2.4" height="7.8" fill="#bcdcfa"/><rect x="0.2" y="27.3" width="2.4" height="7.7" fill="#bcdcfa"/><rect x="4.6" y="0.4" width="5.2" height="2.6" fill="#bcdcfa"/><rect x="4.6" y="36.9" width="5.2" height="2.6" fill="#bcdcfa"/><rect x="37.4" y="7.5" width="2.6" height="7.8" fill="#bcdcfa"/><rect x="37.4" y="27.3" width="2.6" height="7.7" fill="#bcdcfa"/><rect x="29.9" y="0.4" width="5.2" height="2.6" fill="#bcdcfa"/><rect x="29.9" y="36.9" width="5.2" height="2.6" fill="#bcdcfa"/><rect x="15" y="8" width="2.4" height="2.4" fill="#bcdcfa"/><rect x="15" y="13" width="2.4" height="2.4" fill="#bcdcfa"/><rect x="20.6" y="8" width="2.4" height="2.4" fill="#bcdcfa"/><rect x="20.6" y="13" width="2.4" height="2.4" fill="#bcdcfa"/><path d="M1.3 7.5 L1.3 2.2 Q1.3 1.6 2 1.6 L4.6 1.6" fill="none" stroke="#000070" stroke-width="2.6"/><rect x="0" y="15.3" width="2.6" height="12" fill="#000070"/><path d="M1.3 35 L1.3 37.4 Q1.3 38.2 2.2 38.2 L4.6 38.2" fill="none" stroke="#000070" stroke-width="2.6"/><rect x="9.8" y="0.4" width="15" height="2.7" fill="#000070"/><rect x="9.8" y="0.4" width="2.6" height="19.4" fill="#000070"/><rect x="17.6" y="5.5" width="2.6" height="11.7" fill="#000070"/><rect x="9.8" y="25" width="7.8" height="2.6" fill="#000070"/><rect x="9.8" y="36.9" width="7.8" height="2.7" fill="#000070"/><rect x="24.7" y="0.4" width="5.2" height="2.7" fill="#00cc00"/><path d="M35.1 1.7 L38.7 1.7 L38.7 7.5" fill="none" stroke="#00cc00" stroke-width="2.7"/><rect x="24.7" y="0.4" width="2.9" height="18.8" fill="#00cc00"/><path d="M27.6 14.5 L29.5 16.6 L27.6 18.5 Z" fill="#00cc00"/><path d="M33.2 26.2 L38.7 26.2 L38.7 15.3" fill="none" stroke="#00cc00" stroke-width="2.6"/><rect x="17.6" y="25" width="9.7" height="2.4" fill="#00cc00"/><rect x="17.6" y="25" width="2.6" height="14.4" fill="#00cc00"/><rect x="17.6" y="36.8" width="12.3" height="2.8" fill="#00cc00"/><path d="M35.1 38.2 L38.7 38.2 L38.7 35" fill="none" stroke="#00cc00" stroke-width="2.8"/></svg>
<div class="t" style="left:154.40px;top:542.94px;font-size:27px;line-height:27px;color:#333333;transform:scaleX(1.0048);transform-origin:0 0;">Appartamento 2B</div>
<div style="left:143px;top:581px;width:587px;height:2px;background:#dcdcdc;"></div>
<svg style="position:absolute;left:99.5px;top:587.9px" width="40" height="40" viewBox="0 0 40 40"><rect x="27.6" y="3" width="9.8" height="33.7" fill="#ccf9cc"/><rect x="20.2" y="27.3" width="17.2" height="9.4" fill="#ccf9cc"/><rect x="0.2" y="7.5" width="2.4" height="7.8" fill="#bcdcfa"/><rect x="0.2" y="27.3" width="2.4" height="7.7" fill="#bcdcfa"/><rect x="4.6" y="0.4" width="5.2" height="2.6" fill="#bcdcfa"/><rect x="4.6" y="36.9" width="5.2" height="2.6" fill="#bcdcfa"/><rect x="37.4" y="7.5" width="2.6" height="7.8" fill="#bcdcfa"/><rect x="37.4" y="27.3" width="2.6" height="7.7" fill="#bcdcfa"/><rect x="29.9" y="0.4" width="5.2" height="2.6" fill="#bcdcfa"/><rect x="29.9" y="36.9" width="5.2" height="2.6" fill="#bcdcfa"/><rect x="15" y="8" width="2.4" height="2.4" fill="#bcdcfa"/><rect x="15" y="13" width="2.4" height="2.4" fill="#bcdcfa"/><rect x="20.6" y="8" width="2.4" height="2.4" fill="#bcdcfa"/><rect x="20.6" y="13" width="2.4" height="2.4" fill="#bcdcfa"/><path d="M1.3 7.5 L1.3 2.2 Q1.3 1.6 2 1.6 L4.6 1.6" fill="none" stroke="#000070" stroke-width="2.6"/><rect x="0" y="15.3" width="2.6" height="12" fill="#000070"/><path d="M1.3 35 L1.3 37.4 Q1.3 38.2 2.2 38.2 L4.6 38.2" fill="none" stroke="#000070" stroke-width="2.6"/><rect x="9.8" y="0.4" width="15" height="2.7" fill="#000070"/><rect x="9.8" y="0.4" width="2.6" height="19.4" fill="#000070"/><rect x="17.6" y="5.5" width="2.6" height="11.7" fill="#000070"/><rect x="9.8" y="25" width="7.8" height="2.6" fill="#000070"/><rect x="9.8" y="36.9" width="7.8" height="2.7" fill="#000070"/><rect x="24.7" y="0.4" width="5.2" height="2.7" fill="#00cc00"/><path d="M35.1 1.7 L38.7 1.7 L38.7 7.5" fill="none" stroke="#00cc00" stroke-width="2.7"/><rect x="24.7" y="0.4" width="2.9" height="18.8" fill="#00cc00"/><path d="M27.6 14.5 L29.5 16.6 L27.6 18.5 Z" fill="#00cc00"/><path d="M33.2 26.2 L38.7 26.2 L38.7 15.3" fill="none" stroke="#00cc00" stroke-width="2.6"/><rect x="17.6" y="25" width="9.7" height="2.4" fill="#00cc00"/><rect x="17.6" y="25" width="2.6" height="14.4" fill="#00cc00"/><rect x="17.6" y="36.8" width="12.3" height="2.8" fill="#00cc00"/><path d="M35.1 38.2 L38.7 38.2 L38.7 35" fill="none" stroke="#00cc00" stroke-width="2.8"/></svg>
<div class="t" style="left:154.40px;top:595.54px;font-size:27px;line-height:27px;color:#333333;transform:scaleX(1.0048);transform-origin:0 0;">Appartamento 3A</div>
<div style="left:143px;top:633px;width:587px;height:2px;background:#dcdcdc;"></div>
<svg style="position:absolute;left:99.5px;top:640.5px" width="40" height="40" viewBox="0 0 40 40"><rect x="27.6" y="3" width="9.8" height="33.7" fill="#ccf9cc"/><rect x="20.2" y="27.3" width="17.2" height="9.4" fill="#ccf9cc"/><rect x="0.2" y="7.5" width="2.4" height="7.8" fill="#bcdcfa"/><rect x="0.2" y="27.3" width="2.4" height="7.7" fill="#bcdcfa"/><rect x="4.6" y="0.4" width="5.2" height="2.6" fill="#bcdcfa"/><rect x="4.6" y="36.9" width="5.2" height="2.6" fill="#bcdcfa"/><rect x="37.4" y="7.5" width="2.6" height="7.8" fill="#bcdcfa"/><rect x="37.4" y="27.3" width="2.6" height="7.7" fill="#bcdcfa"/><rect x="29.9" y="0.4" width="5.2" height="2.6" fill="#bcdcfa"/><rect x="29.9" y="36.9" width="5.2" height="2.6" fill="#bcdcfa"/><rect x="15" y="8" width="2.4" height="2.4" fill="#bcdcfa"/><rect x="15" y="13" width="2.4" height="2.4" fill="#bcdcfa"/><rect x="20.6" y="8" width="2.4" height="2.4" fill="#bcdcfa"/><rect x="20.6" y="13" width="2.4" height="2.4" fill="#bcdcfa"/><path d="M1.3 7.5 L1.3 2.2 Q1.3 1.6 2 1.6 L4.6 1.6" fill="none" stroke="#000070" stroke-width="2.6"/><rect x="0" y="15.3" width="2.6" height="12" fill="#000070"/><path d="M1.3 35 L1.3 37.4 Q1.3 38.2 2.2 38.2 L4.6 38.2" fill="none" stroke="#000070" stroke-width="2.6"/><rect x="9.8" y="0.4" width="15" height="2.7" fill="#000070"/><rect x="9.8" y="0.4" width="2.6" height="19.4" fill="#000070"/><rect x="17.6" y="5.5" width="2.6" height="11.7" fill="#000070"/><rect x="9.8" y="25" width="7.8" height="2.6" fill="#000070"/><rect x="9.8" y="36.9" width="7.8" height="2.7" fill="#000070"/><rect x="24.7" y="0.4" width="5.2" height="2.7" fill="#00cc00"/><path d="M35.1 1.7 L38.7 1.7 L38.7 7.5" fill="none" stroke="#00cc00" stroke-width="2.7"/><rect x="24.7" y="0.4" width="2.9" height="18.8" fill="#00cc00"/><path d="M27.6 14.5 L29.5 16.6 L27.6 18.5 Z" fill="#00cc00"/><path d="M33.2 26.2 L38.7 26.2 L38.7 15.3" fill="none" stroke="#00cc00" stroke-width="2.6"/><rect x="17.6" y="25" width="9.7" height="2.4" fill="#00cc00"/><rect x="17.6" y="25" width="2.6" height="14.4" fill="#00cc00"/><rect x="17.6" y="36.8" width="12.3" height="2.8" fill="#00cc00"/><path d="M35.1 38.2 L38.7 38.2 L38.7 35" fill="none" stroke="#00cc00" stroke-width="2.8"/></svg>
<div class="t" style="left:154.40px;top:648.14px;font-size:27px;line-height:27px;color:#333333;transform:scaleX(1.0048);transform-origin:0 0;">Appartamento 3B</div>
<div style="left:143px;top:686px;width:587px;height:2px;background:#dcdcdc;"></div>
<div style="left:143px;top:371px;width:2px;height:316px;background:#dcdcdc;"></div>
<div class="t" style="left:769.08px;top:340.44px;font-size:27px;line-height:27px;color:#333;transform:scaleX(1.0593);transform-origin:0 0;">Regime normativo</div>
<div style="left:765px;top:378px;width:2537px;height:49px;box-sizing:border-box;border:2px solid #ababab;"></div>
<div style="left:764px;top:376px;width:239px;height:5px;background:#fff;"></div>
<div class="t" style="left:771.04px;top:390.34px;font-size:27px;line-height:27px;color:#6d6d6d;transform:scaleX(0.9803);transform-origin:0 0;">DM Requisiti minimi del 26/06/2015</div>
<svg style="position:absolute;left:3272px;top:398px" width="20" height="12" viewBox="0 0 20 12"><path d="M2 2 L18 2 L10 10 Z" fill="#cfcfcf"/></svg>
<div class="t" style="left:771.00px;top:435.04px;font-size:27px;line-height:27px;color:#333;transform:scaleX(1.0693);transform-origin:0 0;">Tipologia d'intervento</div>
<div style="left:763px;top:471px;width:2537px;height:49px;box-sizing:border-box;border:2px solid #ababab;"></div>
<div class="t" style="left:769.67px;top:482.54px;font-size:27px;line-height:27px;color:#333;transform:scaleX(1.0153);transform-origin:0 0;">Ristrutturazioni importanti di II livello</div>
<svg style="position:absolute;left:3270px;top:491px" width="22" height="12" viewBox="0 0 22 12"><path d="M2 2 L20 2 L11 10 Z" fill="#6f6f6f"/></svg>
<div style="left:770px;top:533px;width:35px;height:35px;box-sizing:border-box;border:2px solid #a8a8a8;"></div>
<div class="t" style="left:810.02px;top:537.64px;font-size:27px;line-height:27px;color:#333;transform:scaleX(0.9905);transform-origin:0 0;">Isolamento in mezzeria o all'interno</div>
<div style="left:1311px;top:531px;width:35px;height:35px;box-sizing:border-box;border:2px solid #dedede;"></div>
<div class="t" style="left:1350.39px;top:535.94px;font-size:27px;line-height:27px;color:#6d6d6d;transform:scaleX(1.0050);transform-origin:0 0;">Intervento servito mediante la sola estensione dei sistemi tecnici preesistenti</div>
<div style="left:758px;top:586px;width:2546px;height:2px;background:#ababab;"></div>
<div style="left:758px;top:585px;width:3px;height:800px;background:#ababab;"></div>
<div style="left:758px;top:1383px;width:2546px;height:2px;background:#ababab;"></div>
<div style="left:3301px;top:585px;width:3px;height:800px;background:#ababab;"></div>
<div style="left:815px;top:588px;width:2px;height:56px;background:#ababab;"></div>
<div style="left:758px;top:643px;width:2546px;height:2px;background:#ababab;"></div>
<div style="left:2036px;top:595px;width:2px;height:42px;background:#ababab;"></div>
<div style="left:2308px;top:595px;width:2px;height:42px;background:#ababab;"></div>
<div style="left:2549px;top:595px;width:2px;height:42px;background:#ababab;"></div>
<div style="left:2706px;top:595px;width:2px;height:42px;background:#ababab;"></div>
<div style="left:2967px;top:595px;width:2px;height:42px;background:#ababab;"></div>
<div class="t" style="left:1356.45px;top:603.84px;font-size:27px;line-height:27px;color:#6d6d6d;transform:scaleX(0.9754);transform-origin:0 0;">Descrizione</div>
<div class="t" style="left:2142.64px;top:603.84px;font-size:27px;line-height:27px;color:#6d6d6d;transform:scaleX(0.9807);transform-origin:0 0;">Esito</div>
<div class="t" style="left:2323.00px;top:603.84px;font-size:27px;line-height:27px;color:#6d6d6d;transform:scaleX(0.9498);transform-origin:0 0;">Valore Ammissibile</div>
<div class="t" style="left:2740.00px;top:603.84px;font-size:27px;line-height:27px;color:#6d6d6d;transform:scaleX(0.9795);transform-origin:0 0;">Valore Calcolato</div>
<div class="t" style="left:3112.02px;top:603.84px;font-size:27px;line-height:27px;color:#6d6d6d;transform:scaleX(0.9923);transform-origin:0 0;">Um</div>
<div style="left:816px;top:645px;width:2485px;height:51px;background:#cce4f7;"></div>
<div style="left:2037px;top:645px;width:272px;height:51px;background:#90ee90;"></div>
<div style="left:816px;top:696px;width:2485px;height:2px;background:#e0e0e0;"></div>
<div class="t" style="left:827.00px;top:657.94px;font-size:27px;line-height:27px;color:#333;transform:scaleX(0.9900);transform-origin:0 0;">Verifica termoigrometrica</div>
<div class="t" style="left:2125.00px;top:657.94px;font-size:27px;line-height:27px;color:#333;transform:scaleX(1.0000);transform-origin:0 0;">Positivo</div>
<div style="left:2037px;top:698px;width:272px;height:50px;background:#90ee90;"></div>
<div style="left:816px;top:748px;width:2485px;height:2px;background:#e0e0e0;"></div>
<div class="t" style="left:824.98px;top:710.54px;font-size:27px;line-height:27px;color:#333;transform:scaleX(1.0117);transform-origin:0 0;">Riflettanza solare delle coperture</div>
<div class="t" style="left:2125.00px;top:710.54px;font-size:27px;line-height:27px;color:#333;transform:scaleX(1.0000);transform-origin:0 0;">Positivo</div>
<div style="left:2037px;top:750px;width:272px;height:51px;background:#90ee90;"></div>
<div style="left:816px;top:801px;width:2485px;height:2px;background:#e0e0e0;"></div>
<div class="t" style="left:827.00px;top:763.14px;font-size:27px;line-height:27px;color:#333;transform:scaleX(1.0068);transform-origin:0 0;">Trasmittanza media strutture opache</div>
<div class="t" style="left:2125.00px;top:763.14px;font-size:27px;line-height:27px;color:#333;transform:scaleX(1.0000);transform-origin:0 0;">Positivo</div>
<div style="left:2037px;top:803px;width:272px;height:50px;background:#90ee90;"></div>
<div style="left:816px;top:853px;width:2485px;height:2px;background:#e0e0e0;"></div>
<div class="t" style="left:827.00px;top:815.74px;font-size:27px;line-height:27px;color:#333;transform:scaleX(1.0231);transform-origin:0 0;">Trasmittanza media strutture trasparenti</div>
<div class="t" style="left:2125.00px;top:815.74px;font-size:27px;line-height:27px;color:#333;transform:scaleX(1.0000);transform-origin:0 0;">Positivo</div>
<div style="left:2037px;top:855px;width:272px;height:51px;background:#90ee90;"></div>
<div style="left:816px;top:906px;width:2485px;height:2px;background:#e0e0e0;"></div>
<div class="t" style="left:824.98px;top:868.34px;font-size:27px;line-height:27px;color:#333;transform:scaleX(1.0078);transform-origin:0 0;">Fattore di trasmissione solare totale</div>
<div class="t" style="left:2125.00px;top:868.34px;font-size:27px;line-height:27px;color:#333;transform:scaleX(1.0000);transform-origin:0 0;">Positivo</div>
<div style="left:2037px;top:908px;width:272px;height:51px;background:#90ee90;"></div>
<div style="left:816px;top:959px;width:2485px;height:2px;background:#e0e0e0;"></div>
<div class="t" style="left:826.01px;top:920.94px;font-size:27px;line-height:27px;color:#333;transform:scaleX(0.9895);transform-origin:0 0;">Coefficiente medio globale di scambio termico per trasmissione (H't)</div>
<div class="t" style="left:2125.00px;top:920.94px;font-size:27px;line-height:27px;color:#333;transform:scaleX(1.0000);transform-origin:0 0;">Positivo</div>
<div style="left:2037px;top:961px;width:272px;height:50px;background:#90ee90;"></div>
<div style="left:816px;top:1011px;width:2485px;height:2px;background:#e0e0e0;"></div>
<div class="t" style="left:825.02px;top:973.54px;font-size:27px;line-height:27px;color:#333;transform:scaleX(0.9909);transform-origin:0 0;">Efficienza media stagionale dell'impianto servizi: Riscaldamento, Raffrescamento, ACS</div>
<div class="t" style="left:2125.00px;top:973.54px;font-size:27px;line-height:27px;color:#333;transform:scaleX(1.0000);transform-origin:0 0;">Positivo</div>
<div style="left:2037px;top:1013px;width:272px;height:51px;background:#90ee90;"></div>
<div style="left:816px;top:1064px;width:2485px;height:2px;background:#e0e0e0;"></div>
<div class="t" style="left:825.08px;top:1026.14px;font-size:27px;line-height:27px;color:#333;transform:scaleX(0.9601);transform-origin:0 0;">Edificio ad Energia Quasi Zero - NZEB</div>
<div class="t" style="left:2125.00px;top:1026.14px;font-size:27px;line-height:27px;color:#333;transform:scaleX(1.0000);transform-origin:0 0;">Positivo</div>
<div style="left:815px;top:645px;width:2px;height:420px;background:#e0e0e0;"></div>
<div style="left:2036px;top:645px;width:2px;height:420px;background:#e0e0e0;"></div>
<div style="left:2308px;top:645px;width:2px;height:420px;background:#e0e0e0;"></div>
<div style="left:2549px;top:645px;width:2px;height:420px;background:#e0e0e0;"></div>
<div style="left:2706px;top:645px;width:2px;height:420px;background:#e0e0e0;"></div>
<div style="left:2967px;top:645px;width:2px;height:420px;background:#e0e0e0;"></div>
<svg style="position:absolute;left:780px;top:661px" width="14" height="20" viewBox="0 0 14 20"><path d="M2 1 L12 10 L2 19 Z" fill="#8a8a8a"/></svg>
<div style="left:758px;top:1412px;width:2546px;height:2px;background:#ababab;"></div>
<div style="left:758px;top:1412px;width:3px;height:664px;background:#ababab;"></div>
<div style="left:758px;top:2074px;width:2546px;height:2px;background:#ababab;"></div>
<div style="left:3301px;top:1412px;width:3px;height:664px;background:#ababab;"></div>
<div style="left:815px;top:1415px;width:2px;height:94px;background:#ababab;"></div>
<div style="left:758px;top:1508px;width:2546px;height:2px;background:#ababab;"></div>
<div style="left:2649px;top:1419px;width:2px;height:84px;background:#ababab;"></div>
<div style="left:2972px;top:1419px;width:2px;height:84px;background:#ababab;"></div>
<div class="t" style="left:1662.06px;top:1449.14px;font-size:27px;line-height:27px;color:#6d6d6d;transform:scaleX(0.9688);transform-origin:0 0;">Descrizione</div>
<div class="t" style="left:2741.71px;top:1449.14px;font-size:27px;line-height:27px;color:#6d6d6d;transform:scaleX(0.9899);transform-origin:0 0;">Superficiale</div>
<div class="t" style="left:3065.93px;top:1449.14px;font-size:27px;line-height:27px;color:#6d6d6d;transform:scaleX(1.0343);transform-origin:0 0;">Interstiziale</div>
<div style="left:2650px;top:1511px;width:323px;height:50px;background:#90ee90;"></div>
<div style="left:2975px;top:1511px;width:326px;height:50px;background:#90ee90;"></div>
<div style="left:816px;top:1561px;width:2485px;height:2px;background:#e0e0e0;"></div>
<div class="t" style="left:824.69px;top:1524.14px;font-size:27px;line-height:27px;color:#333;transform:scaleX(1.0055);transform-origin:0 0;">Parete esterna da 30 cm</div>
<div class="t" style="left:2763.00px;top:1524.14px;font-size:27px;line-height:27px;color:#333;transform:scaleX(1.0000);transform-origin:0 0;">Positivo</div>
<div class="t" style="left:3089.00px;top:1524.14px;font-size:27px;line-height:27px;color:#333;transform:scaleX(1.0000);transform-origin:0 0;">Positivo</div>
<div style="left:2650px;top:1563px;width:323px;height:50px;background:#90ee90;"></div>
<div style="left:2975px;top:1563px;width:326px;height:50px;background:#90ee90;"></div>
<div style="left:816px;top:1613px;width:2485px;height:2px;background:#e0e0e0;"></div>
<div class="t" style="left:825.68px;top:1576.14px;font-size:27px;line-height:27px;color:#333;transform:scaleX(1.0242);transform-origin:0 0;">Soffitto esterno da 35 cm</div>
<div class="t" style="left:2763.00px;top:1576.14px;font-size:27px;line-height:27px;color:#333;transform:scaleX(1.0000);transform-origin:0 0;">Positivo</div>
<div class="t" style="left:3089.00px;top:1576.14px;font-size:27px;line-height:27px;color:#333;transform:scaleX(1.0000);transform-origin:0 0;">Positivo</div>
<div style="left:815px;top:1510px;width:2px;height:104px;background:#e0e0e0;"></div>
<div style="left:2972px;top:1510px;width:2px;height:104px;background:#e0e0e0;"></div>
<div style="left:816px;top:1512px;width:1834px;height:48px;box-sizing:border-box;border:2px solid #333;border-style:dotted;"></div>
<svg style="position:absolute;left:780px;top:1525px" width="14" height="22" viewBox="0 0 14 22"><path d="M2 1 L12 10.5 L2 20 Z" fill="#8a8a8a"/></svg>
<div style="left:0px;top:2076px;width:3307px;height:58px;background:#106ebe;"></div>
<div style="left:5px;top:2077px;width:3299px;height:2px;background:#0559b0;"></div>
<div style="left:3283px;top:2092px;width:6px;height:6px;background:#c9c9c9;"></div>
<div style="left:3273px;top:2102px;width:6px;height:6px;background:#c9c9c9;"></div>
<div style="left:3283px;top:2102px;width:6px;height:6px;background:#c9c9c9;"></div>
<div style="left:3263px;top:2112px;width:6px;height:6px;background:#c9c9c9;"></div>
<div style="left:3273px;top:2112px;width:6px;height:6px;background:#c9c9c9;"></div>
<div style="left:3283px;top:2112px;width:6px;height:6px;background:#c9c9c9;"></div>
</body></html>
